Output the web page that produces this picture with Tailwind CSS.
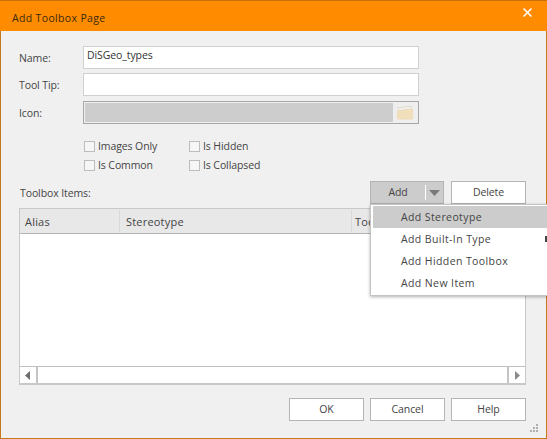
<!DOCTYPE html>
<html>
  <head>
    <meta charset="UTF-8" />
    <title>Add Toolbox Page</title>
    <script src="https://cdn.jsdelivr.net/npm/@tailwindcss/browser@4"></script>
  </head>
  <body class="overflow-hidden">
    <div class="relative flex flex-col w-[547px] h-[439px] bg-[#f0f0f0] border-x border-b border-[#c27a1c] font-['Open_Sans',sans-serif] text-[10.5px] tracking-[-0.1px] text-[#444]">
      <!-- Title bar -->
      <div class="flex items-center justify-between h-[31px] bg-[#ff8c00] border-t border-[#c8700a] -mx-px pl-3 pr-[15px] text-[#3a2a10]">
        <span class="text-[10.5px] tracking-[0.35px] font-medium pt-[5px]">Add Toolbox Page</span>
        <svg width="9" height="9" viewBox="0 0 9 9" class="mb-[7px]"><path d="M0.500 0.500 8.500 8.500M8.500 0.500 0.500 8.500" stroke="#fff" stroke-width="1.500" /></svg>
      </div>

      <div class="flex flex-col pl-[18px] pr-5">
        <!-- Fields -->
        <div class="flex items-center mt-[15px] h-[23px]">
          <span class="w-[64px] pt-[2px]">Name:</span>
          <div class="w-[336px] h-[23px] bg-white border border-[#d0d0d0] pl-[3px] leading-[17px] text-[#333]">DiSGeo_types</div>
        </div>
        <div class="flex items-center mt-[4px] h-[23px]">
          <span class="w-[64px] pt-[2px]">Tool Tip:</span>
          <div class="w-[336px] h-[23px] bg-white border border-[#d0d0d0]"></div>
        </div>
        <div class="flex items-center mt-[5px] h-[23px]">
          <span class="w-[64px] pt-[2px]">Icon:</span>
          <div class="flex w-[336px] h-[23px] border border-[#a6a6a6] p-px">
            <div class="flex-1 bg-[#cdcdcd]"></div>
            <div class="flex items-center justify-center w-[24px] bg-[#eeeeee]">
              <svg width="16" height="14" viewBox="0 0 16 14">
                <path d="M1 3V1.500H6L7 0.500H14.500V4" fill="none" stroke="#e4dccb" />
                <path d="M0.500 13V4.500H6L7 3.500H15.500V13Z" fill="#f1dfbc" stroke="#eedcb8" />
              </svg>
            </div>
          </div>
        </div>

        <!-- Options -->
        <div class="grid grid-cols-[105px_1fr] gap-y-[7px] ml-[65px] mt-[16px]">
          <label class="flex items-center gap-[3px] h-[12px]"><span class="w-[11px] h-[11px] border border-[#bdbdbd] bg-[#f6f6f6]"></span><span class="pt-[2px]">Images Only</span></label>
          <label class="flex items-center gap-[3px] h-[12px]"><span class="w-[11px] h-[11px] border border-[#bdbdbd] bg-[#f6f6f6]"></span><span class="pt-[2px]">Is Hidden</span></label>
          <label class="flex items-center gap-[3px] h-[12px]"><span class="w-[11px] h-[11px] border border-[#bdbdbd] bg-[#f6f6f6]"></span><span class="pt-[2px]">Is Common</span></label>
          <label class="flex items-center gap-[3px] h-[12px]"><span class="w-[11px] h-[11px] border border-[#bdbdbd] bg-[#f6f6f6]"></span><span class="pt-[2px]">Is Collapsed</span></label>
        </div>

        <!-- Toolbox items header -->
        <div class="flex items-center justify-between mt-[10px] h-[23px]">
          <span class="pl-px pt-[2px]">Toolbox Items:</span>
          <div class="flex gap-[7px]">
            <div class="flex items-center w-[74px] h-[23px] bg-[#cccccc] border border-[#b4b4b4]">
              <span class="w-[54px] text-center">Add</span>
              <span class="w-px h-[15px] bg-white"></span>
              <svg width="11" height="6" viewBox="0 0 11 6" class="ml-[3px]"><path d="M0 0H11L5.500 6Z" fill="#7a7a7a" /></svg>
            </div>
            <div class="flex items-center justify-center w-[75px] h-[23px] bg-white border border-[#b4b4b4] pt-px">Delete</div>
          </div>
        </div>

        <!-- Table -->
        <div class="flex flex-col h-[177px] mt-[4px] border-t border-x border-b-2 border-[#c8c8c8] bg-white">
          <div class="flex h-[25px] bg-[#e8e8e8] border-b border-[#b4b4b4] text-[11px] tracking-[0.2px]">
            <div class="flex items-center w-[100px] pl-[5px] pt-[3px] border-r border-[#d8d8d8] my-[1px]">Alias</div>
            <div class="flex items-center w-[232px] pl-[6px] pt-[3px] border-r border-[#d8d8d8] my-[1px]">Stereotype</div>
            <div class="flex items-center pl-[3px] pt-[3px]">Tooltip</div>
          </div>
          <div class="flex-1"></div>
          <div class="flex h-[17px] border-t border-[#c0c0c0]">
            <div class="flex items-center w-[18px] pl-[5px] border-r-2 border-[#c4c4c4]">
              <svg width="6" height="9" viewBox="0 0 6 9"><path d="M5 0V9L0 4.500Z" fill="#6e6e6e" /></svg>
            </div>
            <div class="flex-1"></div>
            <div class="flex items-center w-[18px] pl-[6px] border-l-2 border-[#c4c4c4]">
              <svg width="6" height="9" viewBox="0 0 6 9"><path d="M0 0V9L5 4.500Z" fill="#8a8a8a" /></svg>
            </div>
          </div>
        </div>

        <!-- Footer buttons -->
        <div class="flex justify-end gap-[6px] mt-[13px]">
          <div class="flex items-center justify-center w-[75px] h-[23px] bg-white border border-[#b4b4b4]">OK</div>
          <div class="flex items-center justify-center w-[75px] h-[23px] bg-white border border-[#b4b4b4]">Cancel</div>
          <div class="flex items-center justify-center w-[75px] h-[23px] bg-white border border-[#b4b4b4]">Help</div>
        </div>
      </div>

      <!-- Resize grip -->
      <svg width="9" height="9" viewBox="0 0 9 9" class="absolute right-[8px] bottom-[5px]" fill="#b0b0b0">
        <rect x="7" y="0" width="2" height="2" /><rect x="4" y="3" width="2" height="2" /><rect x="7" y="3" width="2" height="2" />
        <rect x="1" y="6" width="2" height="2" /><rect x="4" y="6" width="2" height="2" /><rect x="7" y="6" width="2" height="2" />
      </svg>

      <!-- Dropdown menu -->
      <div class="absolute left-[369px] top-[204px] w-[178px] h-[92px] bg-white border border-[#c4c4c4] shadow-[0_1px_3px_rgba(0,0,0,0.3)] pl-[2px] pt-px text-[10.5px] tracking-[0.4px]">
        <div class="flex items-center h-[22px] pl-[28px] pt-[2px] bg-[#cccccc]">Add Stereotype</div>
        <div class="relative flex items-center h-[22px] pl-[28px] pt-[2px]">Add Built-In Type<span class="absolute right-0 top-[8px] w-[2px] h-[6px] bg-[#444]"></span></div>
        <div class="flex items-center h-[22px] pl-[28px] pt-[2px]">Add Hidden Toolbox</div>
        <div class="flex items-center h-[22px] pl-[28px] pt-[2px]">Add New Item</div>
      </div>
    </div>
  </body>
</html>
